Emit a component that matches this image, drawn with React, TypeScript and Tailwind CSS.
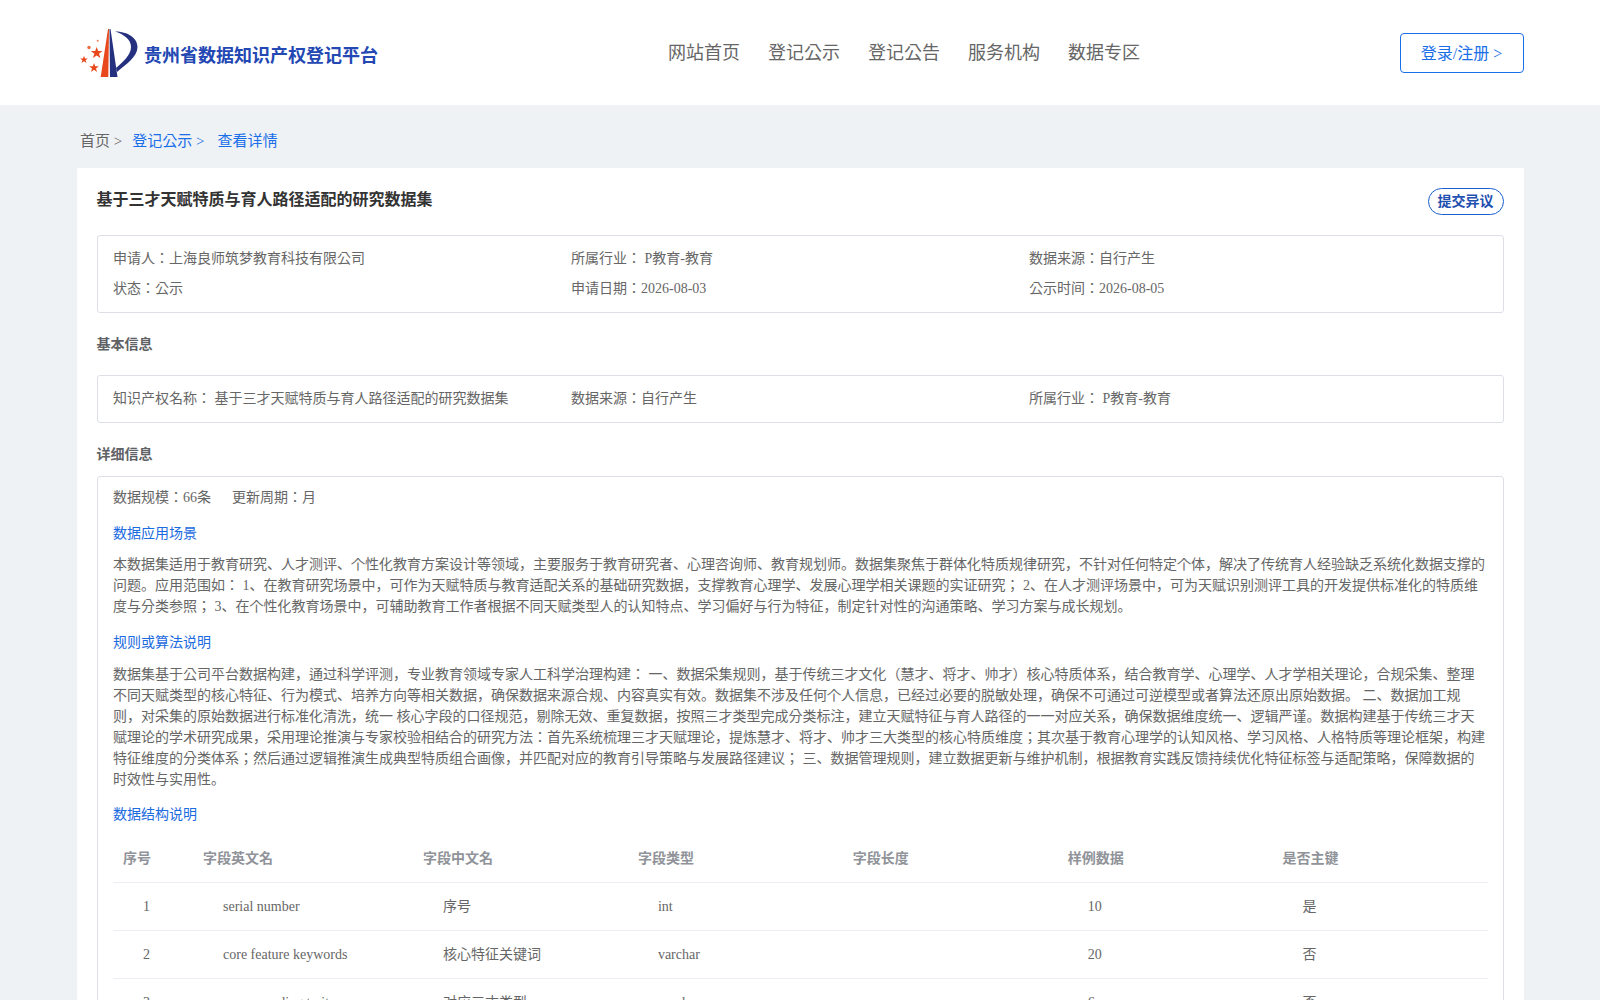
const navItems = ['网站首页', '登记公示', '登记公告', '服务机构', '数据专区']

const fields = [
  { no: 1, en: 'serial number', cn: '序号', type: 'int', len: '', sample: '10', key: '是' },
  { no: 2, en: 'core feature keywords', cn: '核心特征关键词', type: 'varchar', len: '', sample: '20', key: '否' },
  { no: 3, en: 'corresponding trait', cn: '对应三才类型', type: 'varchar', len: '', sample: '6', key: '否' },
]

const headers = ['字段英文名', '字段中文名', '字段类型', '字段长度', '样例数据', '是否主键']

const scene =
  '本数据集适用于教育研究、人才测评、个性化教育方案设计等领域，主要服务于教育研究者、心理咨询师、教育规划师。数据集聚焦于群体化特质规律研究，不针对任何特定个体，解决了传统育人经验缺乏系统化数据支撑的问题。应用范围如： 1、在教育研究场景中，可作为天赋特质与教育适配关系的基础研究数据，支撑教育心理学、发展心理学相关课题的实证研究； 2、在人才测评场景中，可为天赋识别测评工具的开发提供标准化的特质维度与分类参照； 3、在个性化教育场景中，可辅助教育工作者根据不同天赋类型人的认知特点、学习偏好与行为特征，制定针对性的沟通策略、学习方案与成长规划。'

const rules =
  '数据集基于公司平台数据构建，通过科学评测，专业教育领域专家人工科学治理构建： 一、数据采集规则，基于传统三才文化（慧才、将才、帅才）核心特质体系，结合教育学、心理学、人才学相关理论，合规采集、整理不同天赋类型的核心特征、行为模式、培养方向等相关数据，确保数据来源合规、内容真实有效。数据集不涉及任何个人信息，已经过必要的脱敏处理，确保不可通过可逆模型或者算法还原出原始数据。 二、数据加工规则，对采集的原始数据进行标准化清洗，统一 核心字段的口径规范，剔除无效、重复数据，按照三才类型完成分类标注，建立天赋特征与育人路径的一一对应关系，确保数据维度统一、逻辑严谨。数据构建基于传统三才天赋理论的学术研究成果，采用理论推演与专家校验相结合的研究方法：首先系统梳理三才天赋理论，提炼慧才、将才、帅才三大类型的核心特质维度；其次基于教育心理学的认知风格、学习风格、人格特质等理论框架，构建特征维度的分类体系；然后通过逻辑推演生成典型特质组合画像，并匹配对应的教育引导策略与发展路径建议； 三、数据管理规则，建立数据更新与维护机制，根据教育实践反馈持续优化特征标签与适配策略，保障数据的时效性与实用性。'

function Logo() {
  return (
    <svg width="60" height="50" viewBox="0 0 60 50" aria-hidden="true">
      <polygon points="28,1 29,1 28.3,49 20.7,49" fill="#e8481c" />
      <polygon points="29.5,1 30.5,1 37.5,49 30,49" fill="#25317f" />
      <path d="M35,3.5 C48,3.5 57.5,10 57.5,19 C57.5,29 45,37 37,44 L36,40 C43,34 51,27 51,19 C51,11 43,6 35,3.5 Z" fill="#25317f" />
      <polygon points="16.7,19 18.2,23 22.5,23 19,25.8 20.5,30 16.7,27.4 12.9,30 14.4,25.8 10.9,23 15.2,23" fill="#e8481c" />
      <polygon points="4,27.8 5,30.4 7.8,30.4 5.6,32.2 6.5,35 4,33.3 1.5,35 2.4,32.2 0.2,30.4 3,30.4" fill="#e8481c" />
      <polygon points="14,35 15.2,38.2 18.8,38.2 16,40.4 17,44 14,41.8 11,44 12,40.4 9.2,38.2 12.8,38.2" fill="#e8481c" />
      <circle cx="9" cy="19.5" r="1.7" fill="#ee6a3f" />
      <circle cx="17.7" cy="12.7" r="1" fill="#ee7d58" />
    </svg>
  )
}

function InfoCell({ children }: { children: React.ReactNode }) {
  return <div className="leading-[30px]">{children}</div>
}

function SectionTitle({ children }: { children: React.ReactNode }) {
  return <h3 className="text-sm font-bold text-[#606266]">{children}</h3>
}

function LinkTitle({ children }: { children: React.ReactNode }) {
  return <div className="text-sm leading-[21px] text-[#1a6ae0]">{children}</div>
}

export default function App() {
  return (
    <div className="h-[1000px] overflow-hidden bg-[#eff2f5] font-['Liberation_Serif','Noto_Sans_CJK_KR',serif] text-sm text-[#666666]">
      <header className="flex h-[105px] items-center bg-white pl-[80px] pr-[76px]">
        <div className="flex w-[300px] items-center">
          <Logo />
          <span className="ml-[4px] mt-[7px] whitespace-nowrap text-lg font-bold text-[#2347b3]">
            贵州省数据知识产权登记平台
          </span>
        </div>
        <nav className="ml-[288px] flex gap-[28px] text-lg text-[#666666]">
          {navItems.map((item) => (
            <a key={item}>{item}</a>
          ))}
        </nav>
        <a className="ml-auto flex h-[40px] w-[124px] items-center justify-center rounded border border-[#1a6ee8] pr-[1px] pt-[2px] text-base text-[#1a6ee8]">
          登录/注册 &gt;
        </a>
      </header>

      <div className="px-[76.5px]">
        <div className="flex h-[63px] items-center pl-[3.5px] pt-[10px] text-[15px]">
          <span>首页 &gt;</span>
          <span className="ml-[10px] text-[#1a6ee8]">登记公示 &gt;</span>
          <span className="ml-[13px] text-[#1a6ee8]">查看详情</span>
        </div>

        <main className="bg-white px-5 pb-5">
          <div className="flex h-[67px] items-start justify-between">
            <h1 className="mt-[21px] text-base font-bold leading-[22px] text-[#333333]">
              基于三才天赋特质与育人路径适配的研究数据集
            </h1>
            <button className="mt-5 h-[27px] w-[76px] rounded-[14px] border border-[#1a5fd0] text-sm font-bold text-[#1f4fb0]">
              提交异议
            </button>
          </div>

          <div className="grid grid-cols-3 rounded-[3px] border border-[#dcdfe6] px-[15.5px] py-[8px]">
            <InfoCell>申请人：上海良师筑梦教育科技有限公司</InfoCell>
            <InfoCell>所属行业： P教育-教育</InfoCell>
            <InfoCell>数据来源：自行产生</InfoCell>
            <InfoCell>状态：公示</InfoCell>
            <InfoCell>申请日期：2026-08-03</InfoCell>
            <InfoCell>公示时间：2026-08-05</InfoCell>
          </div>

          <div className="flex h-[62px] items-center pt-[2px]">
            <SectionTitle>基本信息</SectionTitle>
          </div>

          <div className="grid grid-cols-3 rounded-[3px] border border-[#dcdfe6] px-[15.5px] py-[8px]">
            <InfoCell>知识产权名称： 基于三才天赋特质与育人路径适配的研究数据集</InfoCell>
            <InfoCell>数据来源：自行产生</InfoCell>
            <InfoCell>所属行业： P教育-教育</InfoCell>
          </div>

          <div className="flex h-[53px] items-center pt-[11px]">
            <SectionTitle>详细信息</SectionTitle>
          </div>

          <div className="rounded-[3px] border border-[#dcdfe6] pl-[15.5px] pr-[15px] pt-[10px]">
            <div className="flex gap-[21px] leading-[21px]">
              <span>数据规模：66条</span>
              <span>更新周期：月</span>
            </div>
            <div className="mt-[15px]">
              <LinkTitle>数据应用场景</LinkTitle>
            </div>
            <p className="mt-[10px] leading-[21px]">{scene}</p>
            <div className="mt-[15px]">
              <LinkTitle>规则或算法说明</LinkTitle>
            </div>
            <p className="mt-[11px] leading-[21px]">{rules}</p>
            <div className="mt-[14px]">
              <LinkTitle>数据结构说明</LinkTitle>
            </div>

            <table className="mt-[9px] w-full table-fixed border-collapse">
              <colgroup>
                <col className="w-[80px]" />
                <col className="w-[220px]" />
                <col />
                <col />
                <col />
                <col />
                <col />
              </colgroup>
              <thead>
                <tr className="h-[48px] border-b border-[#ebeef5] text-left font-bold text-[#909399]">
                  <th className="pl-[10px] pt-[3px]">序号</th>
                  {headers.map((h) => (
                    <th key={h} className="pl-[10px] pt-[3px]">
                      {h}
                    </th>
                  ))}
                </tr>
              </thead>
              <tbody>
                {fields.map((f) => (
                  <tr key={f.no} className="h-[48px] border-b border-[#ebeef5]">
                    <td className="pl-[30px] pt-[1px]">{f.no}</td>
                    <td className="pl-[30px] pt-[1px]">{f.en}</td>
                    <td className="pl-[30px] pt-[1px]">{f.cn}</td>
                    <td className="pl-[30px] pt-[1px]">{f.type}</td>
                    <td className="pl-[30px] pt-[1px]">{f.len}</td>
                    <td className="pl-[30px] pt-[1px]">{f.sample}</td>
                    <td className="pl-[30px] pt-[1px]">{f.key}</td>
                  </tr>
                ))}
              </tbody>
            </table>
          </div>
        </main>
      </div>
    </div>
  )
}
